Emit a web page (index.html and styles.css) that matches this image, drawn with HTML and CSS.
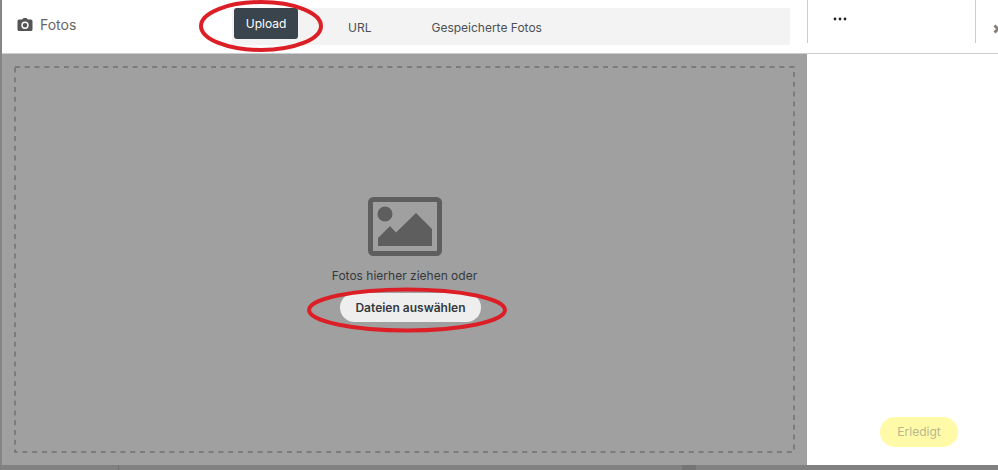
FILE: index.html
```
<!DOCTYPE html>
<html lang="de">
<head>
    <meta charset="UTF-8">
    <meta name="viewport" content="width=device-width, initial-scale=1.0">
    <title>Fotos</title>
    <link rel="stylesheet" href="styles.css">
</head>
<body>
    <div class="dialog">
        <header class="topbar">
            <div class="topbar-main">
                <h1 class="title">
                    <svg class="camera" viewBox="0 0 16 14" aria-hidden="true">
                        <path fill-rule="evenodd" d="M5 1.6 6 .4Q6.300 0 6.800 0H9.200Q9.700 0 10 .4L11 1.600H14Q15.500 1.600 15.500 3.200V11.400Q15.500 13 14 13H2Q.5 13 .5 11.400V3.200Q.5 1.600 2 1.600ZM8 3.500A3.700 3.700 0 1 0 8 10.900 3.700 3.700 0 1 0 8 3.500ZM8 4.900A2.300 2.300 0 1 1 8 9.500 2.300 2.300 0 1 1 8 4.900Z"/>
                    </svg>
                    Fotos
                </h1>
                <nav class="tabs">
                    <div class="marked">
                        <button class="tab active" type="button">Upload</button>
                        <svg class="ring ring-tab" viewBox="0 0 126 54" aria-hidden="true"><ellipse cx="63" cy="27" rx="60" ry="24"/></svg>
                    </div>
                    <button class="tab tab-url" type="button">URL</button>
                    <button class="tab tab-saved" type="button">Gespeicherte Fotos</button>
                </nav>
            </div>
            <div class="topbar-side">
                <button class="more" type="button" aria-label="Mehr">
                    <svg viewBox="0 0 14 4" aria-hidden="true"><circle cx="2" cy="2" r="1.400"/><circle cx="7" cy="2" r="1.400"/><circle cx="12" cy="2" r="1.400"/></svg>
                </button>
                <button class="close" type="button" aria-label="Schließen">
                    <svg viewBox="0 0 10 10" aria-hidden="true"><path d="M1.500 1.500 8.500 8.500M8.500 1.500 1.500 8.500"/></svg>
                </button>
            </div>
        </header>

        <div class="content">
            <main class="upload">
                <div class="dropzone">
                    <svg class="outline" aria-hidden="true"><rect width="100%" height="100%"/></svg>
                    <svg class="picture" viewBox="0 0 74 60" aria-hidden="true">
                        <rect class="frame" x="2.500" y="2.500" width="69" height="54" rx="3"/>
                        <circle cx="17" cy="17" r="7.500"/>
                        <path d="M10 49V41L22 29 28 35.500 48 16 64 32V49Z"/>
                    </svg>
                    <p class="hint">Fotos hierher ziehen oder</p>
                    <div class="marked choose-row">
                        <button class="choose" type="button">Dateien auswählen</button>
                        <svg class="ring ring-choose" viewBox="0 0 202 46" aria-hidden="true"><ellipse cx="101" cy="23" rx="98" ry="20.500"/></svg>
                    </div>
                </div>
            </main>
            <aside class="sidebar">
                <button class="done" type="button" disabled>Erledigt</button>
            </aside>
        </div>
    </div>
    <div class="backdrop"><span class="backdrop-left"></span><span class="backdrop-bar"></span></div>
</body>
</html>
```
FILE: styles.css
```
* {
    box-sizing: border-box;
}

body {
    display: flex;
    flex-direction: column;
    min-height: 100vh;
    margin: 0;
    overflow-x: hidden;
    background: #818181;
    color: #35393d;
    font-family: Inter, "Open Sans", sans-serif;
    font-size: 12px;
    line-height: 16px;
}

button {
    border: none;
    padding: 0;
    background: none;
    color: inherit;
    font: inherit;
    cursor: pointer;
}

.dialog {
    flex: 1;
    display: flex;
    flex-direction: column;
    border-left: 2px solid #858585;
    background: white;
}

/* Header */
.topbar {
    display: flex;
    height: 54px;
    border-bottom: 1px solid #cdcdd0;
}

.topbar-main {
    flex: 1;
    display: flex;
    align-items: flex-start;
    padding: 8px 17px 0 15px;
}

.title {
    display: flex;
    align-items: center;
    gap: 7px;
    width: 215px;
    margin: 0;
    padding-top: 7px;
    color: #666;
    font-size: 14px;
    font-weight: normal;
    line-height: 20px;
}

.camera {
    width: 16px;
    height: 14px;
    fill: #555;
}

.tabs {
    flex: 1;
    display: flex;
    align-items: flex-start;
    height: 37px;
    padding-left: 2px;
    background: #f3f3f3;
}

.marked {
    position: relative;
}

.tab {
    height: 40px;
    color: #4c5054;
}

.tab.active {
    width: 64px;
    height: 31px;
    border-radius: 3px;
    background: #39444c;
    color: white;
}

.tab-url {
    margin-left: 50px;
}

.tab-saved {
    margin-left: 60px;
}

.topbar-side {
    display: flex;
    width: 191px;
    height: 43px;
    border-left: 1px solid #cdcdd0;
}

.more {
    display: flex;
    flex: 1;
    padding: 17px 0 0 25px;
}

.more svg {
    width: 14px;
    height: 4px;
    fill: #222;
}

.close {
    display: flex;
    width: 23px;
    padding: 24px 0 0 17px;
    border-left: 1px solid #cdcdd0;
    overflow: hidden;
}

.close svg {
    flex: none;
    width: 10px;
    height: 10px;
    stroke: #85807c;
    stroke-width: 3;
}

/* Upload area */
.content {
    flex: 1;
    display: flex;
}

.upload {
    flex: 1;
    display: flex;
    padding: 13px;
    background: #a0a0a0;
}

.dropzone {
    position: relative;
    flex: 1;
    display: flex;
    flex-direction: column;
    align-items: center;
    justify-content: center;
}

.outline {
    position: absolute;
    inset: 0;
    width: 100%;
    height: 100%;
    overflow: visible;
}

.outline rect {
    fill: none;
    stroke: #707070;
    stroke-width: 1.5;
    stroke-dasharray: 5 4.8;
}

.picture {
    width: 74px;
    height: 60px;
    fill: #5e5e5e;
}

.frame {
    fill: none;
    stroke: #5e5e5e;
    stroke-width: 5;
}

.hint {
    margin: 11px 0 9px;
}

.choose-row {
    margin-left: 12px;
}

.choose {
    height: 29px;
    padding: 0 15px;
    border-radius: 15px;
    background: #eee;
    font-weight: 600;
}

.ring {
    position: absolute;
    pointer-events: none;
    fill: none;
    stroke: #dc1f26;
    stroke-width: 4;
}

.ring-tab {
    top: -9px;
    left: -36px;
    width: 126px;
    height: 54px;
}

.ring-choose {
    top: -6px;
    left: -34px;
    width: 202px;
    height: 46px;
}

/* Sidebar */
.sidebar {
    display: flex;
    align-items: flex-end;
    justify-content: flex-end;
    width: 191px;
    padding: 18px 40px;
}

.done {
    width: 78px;
    height: 30px;
    border-radius: 15px;
    background: #fffaa8;
    color: #b9b78f;
}

/* Page behind the dialog */
.backdrop {
    display: flex;
    justify-content: space-between;
    height: 5px;
}

.backdrop-left {
    width: 119px;
    border-right: 1px solid #707070;
}

.backdrop-bar {
    width: 14px;
    margin-right: 302px;
    background: #757575;
}
```
